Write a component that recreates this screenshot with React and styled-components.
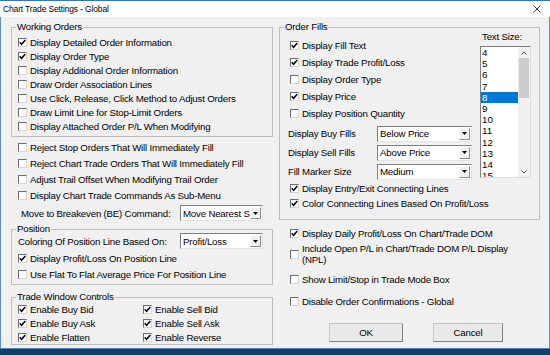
import React from 'react'
import styled, { createGlobalStyle } from 'styled-components'

const GlobalStyle = createGlobalStyle`
  html, body { margin: 0; padding: 0; background: #163d66; }
  body {
    font-family: "Liberation Sans", Arial, sans-serif;
    font-size: 9.7px;
    letter-spacing: -0.2px;
    color: #000;
  }
`

const Window = styled.div`
  width: 550px;
  height: 355px;
  display: flex;
  flex-direction: column;
  overflow: hidden;
  background: #163d66;
`

const TopEdge = styled.div`
  height: 1px;
  background: #3a75b0;
`

const TitleBar = styled.div`
  height: 16px;
  background: #fff;
  display: flex;
  align-items: center;
  justify-content: space-between;
  padding: 0 9px 0 3px;
  font-size: 8.5px;
  letter-spacing: -0.15px;
`

const Body = styled.div`
  height: 331px;
  box-sizing: border-box;
  background: #f0f0f0;
  border-left: 1px solid #5b8fc7;
  border-right: 1px solid #5b8fc7;
  display: flex;
  gap: 6px;
  padding: 4px 9px 0 10px;
`

const BottomEdge = styled.div`
  flex: 1;
  border-top: 1px solid #4f86bf;
  background: #163d66;
`

const Column = styled.div`
  width: ${p => p.$w}px;
  display: flex;
  flex-direction: column;
`

const Group = styled.fieldset`
  margin: ${p => p.$mt || 0}px 0 0 0;
  padding: 0;
  border: 1px solid #bdbdbd;
  min-width: 0;
`

const Legend = styled.legend`
  margin-left: 4px;
  padding: 0 1px;
  line-height: 12px;
`

const GroupInner = styled.div`
  padding: ${p => p.$pt || 0}px 0 ${p => p.$pb || 0}px ${p => p.$pl || 6}px;
`

const Row = styled.div`
  display: flex;
  align-items: center;
  height: ${p => (p.$h ? `${p.$h}px` : 'auto')};
  padding-left: ${p => p.$pl || 0}px;
  margin-top: ${p => p.$mt || 0}px;
`

const Box = styled.span`
  width: 9px;
  height: 9px;
  box-sizing: border-box;
  flex: none;
  background: #fff;
  border: 1px solid;
  border-color: #6d6d6d #d6d6d6 #d6d6d6 #6d6d6d;
  display: flex;
  align-items: center;
  justify-content: center;
  margin-right: 3px;
`

const Label = styled.span`
  white-space: nowrap;
  line-height: 11px;
`

const FieldLabel = styled.span`
  width: ${p => p.$w}px;
  flex: none;
  white-space: nowrap;
`

const Select = styled.div`
  width: ${p => p.$w}px;
  height: 16px;
  box-sizing: border-box;
  background: #fff;
  border: 1px solid;
  border-color: #7f7f7f #e3e3e3 #e3e3e3 #7f7f7f;
  display: flex;
  align-items: center;
`

const SelectValue = styled.span`
  flex: 1;
  min-width: 0;
  padding-left: 2px;
  white-space: nowrap;
`

const DropButton = styled.span`
  width: 11px;
  height: 12px;
  box-sizing: border-box;
  margin-right: 1px;
  flex: none;
  background: #f0f0f0;
  border: 1px solid;
  border-color: #fff #8a8a8a #8a8a8a #fff;
  display: flex;
  align-items: center;
  justify-content: center;
`

const ControlGrid = styled.div`
  display: grid;
  grid-template-columns: 125px 1fr;
  grid-auto-rows: 14px;
  padding-left: 6px;
  margin-top: -1px;
`

const FillsRow = styled.div`
  display: flex;
`

const FillsMain = styled.div`
  width: 200px;
  display: flex;
  flex-direction: column;
`

const SizeColumn = styled.div`
  display: flex;
  flex-direction: column;
  margin-top: -2px;
`

const SizeLabel = styled.div`
  line-height: 12px;
  padding-left: 2px;
`

const ListBox = styled.div`
  margin-top: 3px;
  width: 51px;
  height: 132px;
  box-sizing: border-box;
  background: #fff;
  border: 1px solid;
  border-color: #7f7f7f #dcdcdc #dcdcdc #7f7f7f;
  display: flex;
  overflow: hidden;
`

const ListItems = styled.div`
  width: 37px;
  font-size: 9.8px;
  letter-spacing: 0;
`

const ListItem = styled.div`
  height: 11.2px;
  line-height: 11.2px;
  padding-left: 1px;
  background: ${p => (p.$selected ? '#0078d7' : 'transparent')};
  color: ${p => (p.$selected ? '#fff' : '#000')};
`

const ScrollBar = styled.div`
  width: 12px;
  background: #f0f0f0;
  display: flex;
  flex-direction: column;
  align-items: center;
`

const ScrollArrow = styled.div`
  height: 11px;
  display: flex;
  align-items: center;
  justify-content: center;
`

const Thumb = styled.div`
  width: 10px;
  height: 40px;
  background: #cdcdcd;
`

const Spacer = styled.div`
  flex: 1;
`

const Buttons = styled.div`
  display: flex;
  gap: 30px;
  padding-left: 50px;
  margin-top: 14px;
`

const Button = styled.div`
  width: ${p => p.$w}px;
  height: 19px;
  box-sizing: border-box;
  background: #e9e9e9;
  border: 1px solid;
  border-color: #c4c4c4 #7f7f7f #7f7f7f #c4c4c4;
  display: flex;
  align-items: center;
  justify-content: center;
`

const CheckMark = () => (
  <svg width="7" height="7" viewBox="0 0 7 7">
    <path d="M0.7 3.3 L2.6 5.3 L6.3 1.1" fill="none" stroke="#000" strokeWidth="1.5" />
  </svg>
)

const DownTriangle = () => (
  <svg width="5" height="3" viewBox="0 0 5 3">
    <path d="M0 0 H5 L2.5 3 Z" fill="#000" />
  </svg>
)

const Chevron = ({ up }) => (
  <svg width="6" height="4" viewBox="0 0 6 4">
    <path d={up ? 'M0.5 3.5 L3 1 L5.5 3.5' : 'M0.5 0.5 L3 3 L5.5 0.5'} fill="none" stroke="#444" strokeWidth="1" />
  </svg>
)

const CloseIcon = () => (
  <svg width="8" height="8" viewBox="0 0 8 8">
    <path d="M0.5 0.5 L7.5 7.5 M7.5 0.5 L0.5 7.5" stroke="#222" strokeWidth="0.9" />
  </svg>
)

const Check = ({ label, checked, h, pl, mt }) => (
  <Row $h={h} $pl={pl} $mt={mt}>
    <Box>{checked && <CheckMark />}</Box>
    <Label>{label}</Label>
  </Row>
)

const Dropdown = ({ value, w }) => (
  <Select $w={w}>
    <SelectValue>{value}</SelectValue>
    <DropButton>
      <DownTriangle />
    </DropButton>
  </Select>
)

const workingOrders = [
  ['Display Detailed Order Information', true],
  ['Display Order Type', true],
  ['Display Additional Order Information', false],
  ['Draw Order Association Lines', false],
  ['Use Click, Release, Click Method to Adjust Orders', false],
  ['Draw Limit Line for Stop-Limit Orders', false],
  ['Display Attached Order P/L When Modifying', false],
]

const rejectOptions = [
  'Reject Stop Orders That Will Immediately Fill',
  'Reject Chart Trade Orders That Will Immediately Fill',
  'Adjust Trail Offset When Modifying Trail Order',
  'Display Chart Trade Commands As Sub-Menu',
]

const tradeControls = [
  'Enable Buy Bid',
  'Enable Sell Bid',
  'Enable Buy Ask',
  'Enable Sell Ask',
  'Enable Flatten',
  'Enable Reverse',
]

const fillChecks = [
  ['Display Fill Text', true],
  ['Display Trade Profit/Loss', true],
  ['Display Order Type', false],
  ['Display Price', true],
  ['Display Position Quantity', false],
]

const fillSelects = [
  ['Display Buy Fills', 'Below Price'],
  ['Display Sell Fills', 'Above Price'],
  ['Fill Marker Size', 'Medium'],
]

const sizes = [4, 5, 6, 7, 8, 9, 10, 11, 12, 13, 14, 15]

export default function App() {
  return (
    <Window>
      <GlobalStyle />
      <TopEdge />
      <TitleBar>
        <span>Chart Trade Settings - Global</span>
        <CloseIcon />
      </TitleBar>
      <Body>
        <Column $w={262}>
          <Group>
            <Legend>Working Orders</Legend>
            <GroupInner $pt={2} $pb={3}>
              {workingOrders.map(([label, checked]) => (
                <Check key={label} label={label} checked={checked} h={14} />
              ))}
            </GroupInner>
          </Group>

          <Row $mt={2} />
          {rejectOptions.map(label => (
            <Check key={label} label={label} h={16} pl={7} />
          ))}

          <Row $h={18} $pl={10} $mt={1}>
            <FieldLabel $w={159}>Move to Breakeven (BE) Command:</FieldLabel>
            <Dropdown value="Move Nearest S" w={83} />
          </Row>

          <Group $mt={1}>
            <Legend>Position</Legend>
            <GroupInner $pb={2}>
              <Row $h={18} $mt={-3}>
                <FieldLabel $w={162}>Coloring Of Position Line Based On:</FieldLabel>
                <Dropdown value="Profit/Loss" w={83} />
              </Row>
              <Check label="Display Profit/Loss On Position Line" checked h={16} />
              <Check label="Use Flat To Flat Average Price For Position Line" h={16} />
            </GroupInner>
          </Group>

          <Group $mt={6}>
            <Legend>Trade Window Controls</Legend>
            <ControlGrid>
              {tradeControls.map(label => (
                <Check key={label} label={label} checked />
              ))}
            </ControlGrid>
          </Group>
        </Column>

        <Column $w={261}>
          <Group>
            <Legend>Order Fills</Legend>
            <FillsRow>
              <FillsMain>
                <Row $mt={4} />
                {fillChecks.map(([label, checked]) => (
                  <Check key={label} label={label} checked={checked} h={17} pl={10} />
                ))}
                <Row $mt={2} />
                {fillSelects.map(([label, value]) => (
                  <Row key={label} $h={19} $pl={8}>
                    <FieldLabel $w={89}>{label}</FieldLabel>
                    <Dropdown value={value} w={95} />
                  </Row>
                ))}
                <Check label="Display Entry/Exit Connecting Lines" checked h={15} pl={10} />
                <Check label="Color Connecting Lines Based On Profit/Loss" checked h={15} pl={10} />
                <Row $mt={8} />
              </FillsMain>
              <SizeColumn>
                <SizeLabel>Text Size:</SizeLabel>
                <ListBox>
                  <ListItems>
                    {sizes.map(s => (
                      <ListItem key={s} $selected={s === 8}>{s}</ListItem>
                    ))}
                  </ListItems>
                  <ScrollBar>
                    <ScrollArrow><Chevron up /></ScrollArrow>
                    <Thumb />
                    <Spacer />
                    <ScrollArrow><Chevron /></ScrollArrow>
                  </ScrollBar>
                </ListBox>
              </SizeColumn>
            </FillsRow>
          </Group>

          <Check label="Display Daily Profit/Loss On Chart/Trade DOM" checked h={16} pl={11} mt={5} />
          <Check
            label={<>Include Open P/L in Chart/Trade DOM P/L Display<br />(NPL)</>}
            h={22}
            pl={11}
            mt={2}
          />
          <Check label="Show Limit/Stop in Trade Mode Box" h={16} pl={11} mt={6} />
          <Check label="Disable Order Confirmations - Global" h={16} pl={11} mt={6} />

          <Buttons>
            <Button $w={74}>OK</Button>
            <Button $w={70}>Cancel</Button>
          </Buttons>
        </Column>
      </Body>
      <BottomEdge />
    </Window>
  )
}
